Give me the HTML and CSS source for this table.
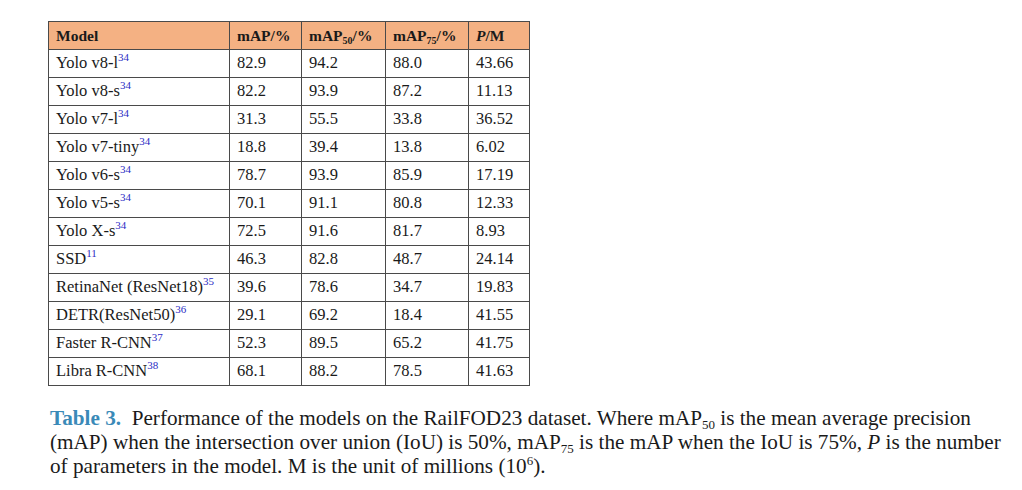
FILE: index.html
```html
<!DOCTYPE html>
<html lang="en">
<head>
    <meta charset="UTF-8">
    <title>Table 3</title>
    <link rel="stylesheet" href="styles.css">
</head>
<body>
    <div class="figure">
        <table class="results">
            <thead>
                <tr>
                    <th class="col-model">Model</th>
                    <th class="col-map">mAP/%</th>
                    <th class="col-map50">mAP<sub>50</sub>/%</th>
                    <th class="col-map75">mAP<sub>75</sub>/%</th>
                    <th class="col-pm"><i>P</i>/M</th>
                </tr>
            </thead>
            <tbody>
                <tr><td>Yolo v8-l<sup>34</sup></td><td>82.9</td><td>94.2</td><td>88.0</td><td>43.66</td></tr>
                <tr><td>Yolo v8-s<sup>34</sup></td><td>82.2</td><td>93.9</td><td>87.2</td><td>11.13</td></tr>
                <tr><td>Yolo v7-l<sup>34</sup></td><td>31.3</td><td>55.5</td><td>33.8</td><td>36.52</td></tr>
                <tr><td>Yolo v7-tiny<sup>34</sup></td><td>18.8</td><td>39.4</td><td>13.8</td><td>6.02</td></tr>
                <tr><td>Yolo v6-s<sup>34</sup></td><td>78.7</td><td>93.9</td><td>85.9</td><td>17.19</td></tr>
                <tr><td>Yolo v5-s<sup>34</sup></td><td>70.1</td><td>91.1</td><td>80.8</td><td>12.33</td></tr>
                <tr><td>Yolo X-s<sup>34</sup></td><td>72.5</td><td>91.6</td><td>81.7</td><td>8.93</td></tr>
                <tr><td>SSD<sup>11</sup></td><td>46.3</td><td>82.8</td><td>48.7</td><td>24.14</td></tr>
                <tr><td>RetinaNet (ResNet18)<sup>35</sup></td><td>39.6</td><td>78.6</td><td>34.7</td><td>19.83</td></tr>
                <tr><td>DETR(ResNet50)<sup>36</sup></td><td>29.1</td><td>69.2</td><td>18.4</td><td>41.55</td></tr>
                <tr><td>Faster R-CNN<sup>37</sup></td><td>52.3</td><td>89.5</td><td>65.2</td><td>41.75</td></tr>
                <tr><td>Libra R-CNN<sup>38</sup></td><td>68.1</td><td>88.2</td><td>78.5</td><td>41.63</td></tr>
            </tbody>
        </table>

        <p class="caption">
            <span class="caption-label">Table 3.</span>&nbsp; Performance of the models on the RailFOD23 dataset. Where mAP<sub>50</sub> is the mean average precision<br>
            (mAP) when the intersection over union (IoU) is 50%, mAP<sub>75</sub> is the mAP when the IoU is 75%, <i>P</i> is the number<br>
            of parameters in the model. M is the unit of millions (10<sup>6</sup>).
        </p>
    </div>
</body>
</html>
```

FILE: styles.css
```css
body {
    margin: 0;
    background: #ffffff;
    font-family: "Liberation Serif", "Times New Roman", serif;
    color: #1a1a1a;
}

.figure {
    padding: 21px 0 0 48px;
}

.results {
    border-collapse: collapse;
    table-layout: fixed;
}

.results th,
.results td {
    border: 1.5px solid #4a4a4a;
    height: 27px;
    padding: 0 7px;
    text-align: left;
    vertical-align: middle;
    line-height: 1;
    white-space: nowrap;
}

.results th {
    background: #f4b183;
    font-size: 15.5px;
    font-weight: bold;
}

.results td {
    font-size: 16.5px;
}

.col-model { width: 166px; }
.col-map { width: 57px; }
.col-map50 { width: 69px; }
.col-map75 { width: 68px; }
.col-pm { width: 46px; }

.results sub {
    font-size: 10px;
    vertical-align: -3px;
    line-height: 0;
}

.results sup {
    font-size: 11px;
    vertical-align: 7px;
    line-height: 0;
    color: #2b2bc4;
}

.caption {
    margin: 20px 0 0 2px;
    font-size: 21.2px;
    line-height: 24px;
    white-space: nowrap;
    color: #1a1a1a;
}

.caption-label {
    color: #3a8ab8;
    font-weight: bold;
}

.caption sub {
    font-size: 13px;
    vertical-align: -4px;
    line-height: 0;
}

.caption sup {
    font-size: 13px;
    vertical-align: 8px;
    line-height: 0;
}
```
